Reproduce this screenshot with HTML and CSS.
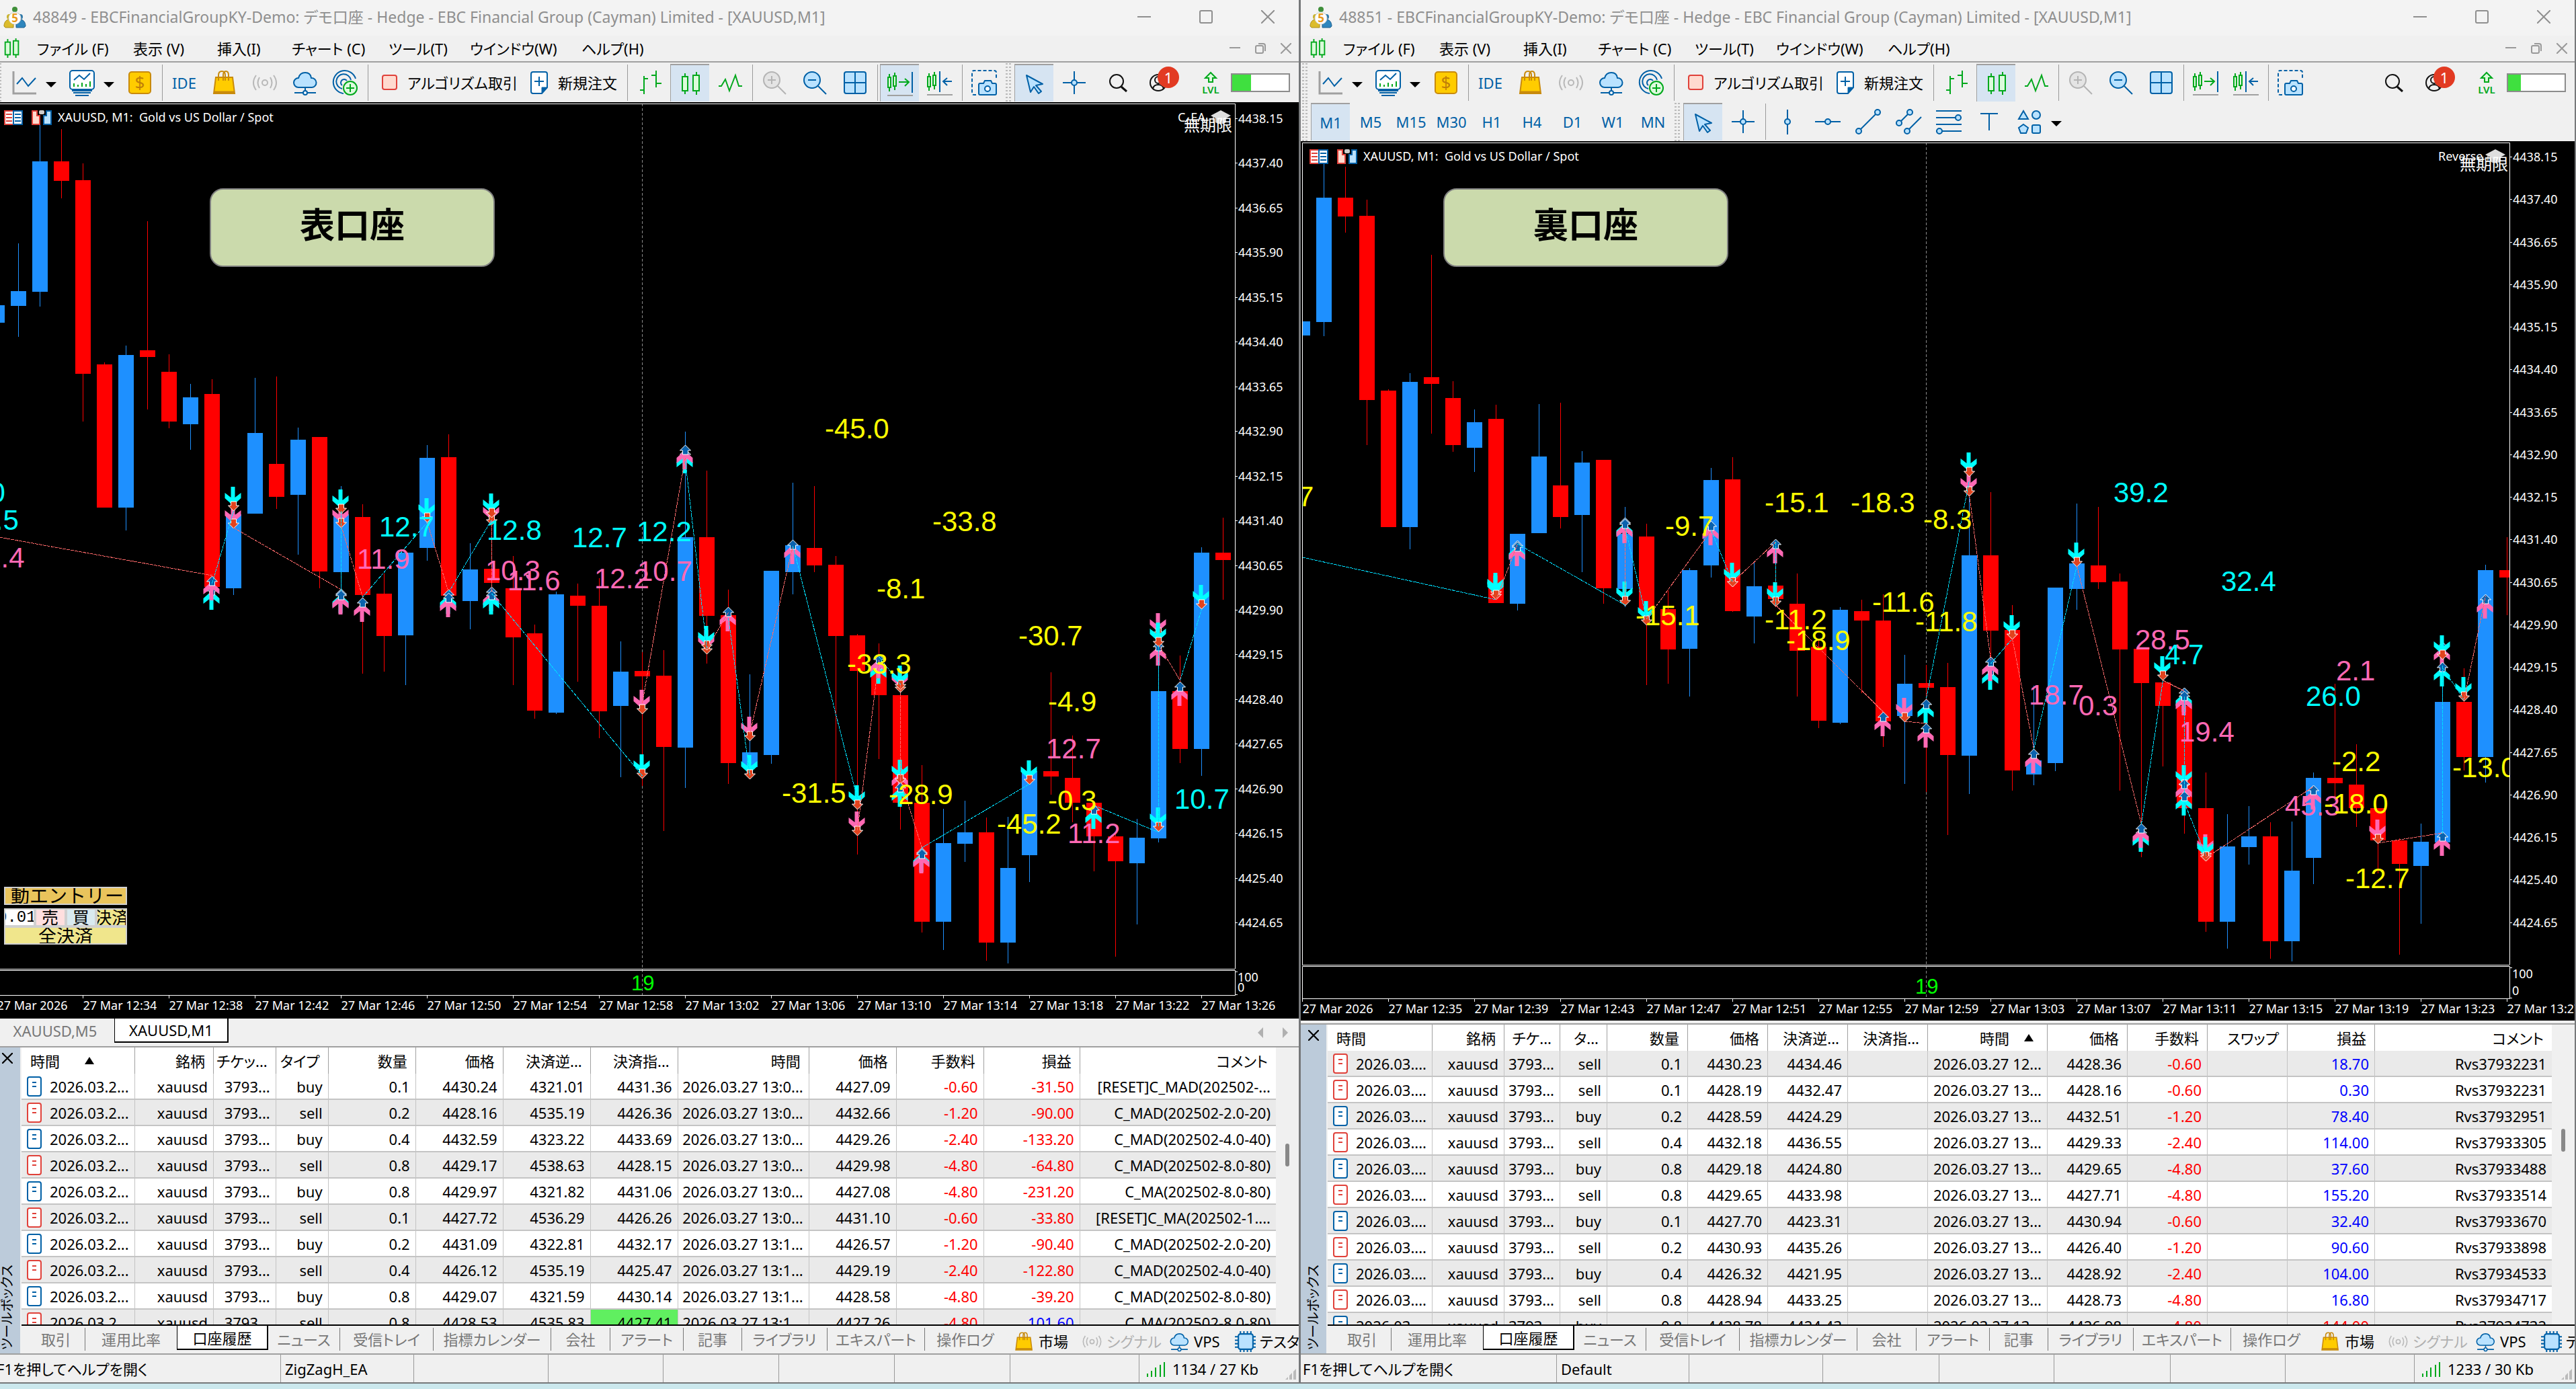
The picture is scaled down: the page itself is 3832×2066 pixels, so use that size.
FILE: index.html
```html
<!DOCTYPE html>
<html lang="ja">
<head>
<meta charset="utf-8">
<title>XAUUSD,M1</title>
<link rel="stylesheet" href="styles.css">
</head>
<body>
<svg class="sprite" aria-hidden="true">
  <symbol id="logo" viewBox="0 0 34 34"><circle cx="17" cy="6" r="4" fill="#3f8f3a"/><path d="M9 16C10 9 24 9 25 16L22 22H12z" fill="#55a047" stroke="#2f7a2e"/><circle cx="9" cy="17" r="4" fill="#c9b22a"/><path d="M1 31C1 21 10 18 15 24V33H3z" fill="#dcbc2c" stroke="#a98d16"/><circle cx="25" cy="17" r="4" fill="#2e78a8"/><path d="M33 31C33 21 24 18 19 24V33H31z" fill="#2f86bd" stroke="#1c5f8e"/><circle cx="17" cy="19" r="9" fill="#fff" stroke="#d8d8d8"/><text x="17" y="25" font-size="17" font-weight="700" text-anchor="middle" fill="#e89a1c">5</text></symbol>
  <symbol id="doc-candles" viewBox="0 0 26 32"><g fill="#d9fbd9" stroke="#00a81c" stroke-width="2"><path d="M6 1v30M19 0v31"/><rect x="2" y="6" width="8" height="20"/><rect x="15" y="4" width="8" height="22"/></g></symbol>
  <symbol id="line" viewBox="0 0 40 40"><path d="M4 3v33h34" fill="none" stroke="#a0a0a0" stroke-width="3"/><path d="M9 22l8-9 9 12 11-12" fill="none" stroke="#0060a6" stroke-width="2"/></symbol>
  <symbol id="tpl" viewBox="0 0 40 40"><path d="M5 32h30M7 35h26M10 39h20" stroke="#0060a6" stroke-width="2"/><rect x="2" y="2" width="36" height="28" rx="4" fill="#fff" stroke="#0060a6" stroke-width="2"/><path d="M8 16l8-7 7 6 9-9" fill="none" stroke="#0060a6" stroke-width="2"/><path d="M8 21v5M14 23v3M20 20v6M26 22v4M32 18v8" stroke="#00a81c" stroke-width="2"/></symbol>
  <symbol id="dollar" viewBox="0 0 40 40"><rect x="4" y="4" width="32" height="32" rx="4" fill="#ffcc00" stroke="#c88a0c" stroke-width="2"/><text x="20" y="29" font-size="26" text-anchor="middle" fill="#c07f08">$</text></symbol>
  <symbol id="bag" viewBox="0 0 40 40"><path d="M7 12h25l3 24H4z" fill="#ffcc00" stroke="#c88a0c" stroke-width="2"/><path d="M4 34h31" stroke="#c88a0c" stroke-width="3"/><path d="M11 17V9q0-6 5-6t5 6v8M18 17V9q0-6 4-6t4 6v8" fill="none" stroke="#c88a0c" stroke-width="2"/></symbol>
  <symbol id="signal" viewBox="0 0 40 40"><g fill="none" stroke="#b8b8b8" stroke-width="2"><circle cx="20" cy="20" r="4"/><path d="M12 12q-5 8 0 16M28 12q5 8 0 16M7 9q-8 11 0 22M33 9q8 11 0 22"/></g></symbol>
  <symbol id="cloud" viewBox="0 0 40 40"><path d="M10 27a7 7 0 0 1 0-14q2-8 10-8t9 8a7 7 0 0 1 1 14z" fill="#b9e2ff" stroke="#0060a6" stroke-width="2"/><path d="M20 27v6M4 35h32" stroke="#0060a6" stroke-width="2"/><circle cx="20" cy="35" r="3" fill="#fff" stroke="#0060a6" stroke-width="2"/></symbol>
  <symbol id="radar" viewBox="0 0 40 40"><g fill="none" stroke="#0060a6" stroke-width="2"><path d="M17 36A17 17 0 1 1 35 14M15 29a11 11 0 1 1 13-13M15 24a5 5 0 1 1 7-7"/></g><circle cx="27" cy="28" r="10" fill="#defade" stroke="#00a81c" stroke-width="2"/><path d="M27 22v12M21 28h12" stroke="#00a81c" stroke-width="2"/></symbol>
  <symbol id="stop" viewBox="0 0 24 24"><rect x="1" y="1" width="21" height="21" rx="3" fill="#ffdacf" stroke="#e0413a" stroke-width="2"/></symbol>
  <symbol id="order" viewBox="0 0 28 36"><path d="M5 2h18q3 0 3 3v20l-8 9H5q-3 0-3-3V5q0-3 3-3z" fill="#fff" stroke="#0060a6" stroke-width="2"/><path d="M18 34v-9h8z" fill="#0060a6" stroke="#0060a6"/><path d="M14 9v14M7 16h14" stroke="#0060a6" stroke-width="2"/></symbol>
  <symbol id="bars" viewBox="0 0 40 40"><path d="M12 10v27M6 31h6M12 14h6M30 2v25M23 9h7M30 21h8" fill="none" stroke="#00a81c" stroke-width="2"/></symbol>
  <symbol id="candles" viewBox="0 0 40 40"><g fill="#dcfbdc" stroke="#00a81c" stroke-width="2"><path d="M12 5v31M29 3v34"/><rect x="8" y="10" width="8" height="21"/><rect x="24" y="8" width="9" height="23"/></g></symbol>
  <symbol id="zig" viewBox="0 0 40 40"><path d="M3 25h4l6-10 6 17L28 9l5 16h5" fill="none" stroke="#00a81c" stroke-width="2"/></symbol>
  <symbol id="zin" viewBox="0 0 40 40"><g stroke="#b4b4b4" stroke-width="2"><circle cx="16" cy="16" r="12" fill="#e4e4e4"/><path d="M25 25l12 12M16 10v12M10 16h12"/></g></symbol>
  <symbol id="zout" viewBox="0 0 40 40"><g stroke="#0060a6" stroke-width="2"><circle cx="16" cy="16" r="12" fill="#b9e2ff"/><path d="M25 25l12 12M10 16h12"/></g></symbol>
  <symbol id="tiles" viewBox="0 0 40 40"><g stroke="#0060a6" stroke-width="2"><rect x="4" y="4" width="32" height="32" rx="3" fill="#b9e2ff"/><path d="M20 4v32M4 20h32"/></g></symbol>
  <symbol id="shift" viewBox="0 0 40 40"><g fill="#dcfbdc" stroke="#00a81c" stroke-width="2"><path d="M4 6v26M12 4v26"/><rect x="2" y="11" width="4" height="15"/><rect x="10" y="9" width="4" height="15"/><path d="M18 18h14M27 13l6 5-6 6" fill="none"/></g><path d="M38 3v31" stroke="#0060a6" stroke-width="2"/><path d="M1 38h38" stroke="#a0a0a0" stroke-width="2"/></symbol>
  <symbol id="scroll" viewBox="0 0 40 40"><g fill="#dcfbdc" stroke="#00a81c" stroke-width="2"><path d="M4 6v26M12 4v26"/><rect x="2" y="11" width="4" height="15"/><rect x="10" y="9" width="4" height="15"/></g><path d="M20 3v31M38 18H26M31 13l-6 5 6 6" fill="none" stroke="#0060a6" stroke-width="2"/><path d="M1 38h38" stroke="#a0a0a0" stroke-width="2"/></symbol>
  <symbol id="camera" viewBox="0 0 40 40"><path d="M8 38H5q-3 0-3-3V5q0-3 3-3h30q3 0 3 3v9" fill="none" stroke="#0060a6" stroke-width="2" stroke-dasharray="5 3"/><path d="M14 21h5l2-4h9l2 4h4q2 0 2 2v13q0 2-2 2H14q-2 0-2-2V23q0-2 2-2z" fill="#b9e2ff" stroke="#0060a6" stroke-width="2"/><circle cx="25" cy="29" r="4" fill="#fff" stroke="#0060a6" stroke-width="2"/></symbol>
  <symbol id="cursor" viewBox="0 0 40 40"><path d="M8 8l24 13-10 2 8 9-4 3-7-10-5 8z" fill="#b9e2ff" stroke="#0060a6" stroke-width="2" stroke-linejoin="round"/></symbol>
  <symbol id="cross" viewBox="0 0 40 40"><path d="M20 3v34M3 20h34" stroke="#0060a6" stroke-width="2"/><circle cx="20" cy="20" r="4" fill="#b9e2ff" stroke="#0060a6" stroke-width="2"/></symbol>
  <symbol id="search" viewBox="0 0 40 40"><circle cx="18" cy="18" r="10" fill="none" stroke="#111" stroke-width="2"/><path d="M25 26l8 7" stroke="#111" stroke-width="3"/></symbol>
  <symbol id="person" viewBox="0 0 40 40"><g fill="none" stroke="#111" stroke-width="2"><circle cx="20" cy="20" r="12"/><circle cx="20" cy="16" r="5"/><path d="M12 29q1-6 8-6t8 6"/></g></symbol>
  <symbol id="lvl" viewBox="0 0 40 40"><path d="M17 19v-6h-5l8-8 8 8h-5v6z" fill="#dcfbdc" stroke="#00a81c" stroke-width="2"/><text x="20" y="36" font-size="15" font-weight="600" text-anchor="middle" fill="#00a81c">LVL</text></symbol>
  <symbol id="vline" viewBox="0 0 40 40"><path d="M20 2v37" stroke="#0060a6" stroke-width="2"/><circle cx="20" cy="20" r="4" fill="#b9e2ff" stroke="#0060a6" stroke-width="2"/></symbol>
  <symbol id="hline" viewBox="0 0 40 40"><path d="M1 20h38" stroke="#0060a6" stroke-width="2"/><circle cx="20" cy="20" r="4" fill="#b9e2ff" stroke="#0060a6" stroke-width="2"/></symbol>
  <symbol id="trend" viewBox="0 0 40 40"><g fill="#b9e2ff" stroke="#0060a6" stroke-width="2"><path d="M6 34L34 6"/><circle cx="6" cy="34" r="4"/><circle cx="34" cy="6" r="4"/></g></symbol>
  <symbol id="channel" viewBox="0 0 40 40"><g fill="#b9e2ff" stroke="#0060a6" stroke-width="2"><path d="M6 22L22 6M18 34l21-21"/><circle cx="6" cy="22" r="4"/><circle cx="22" cy="6" r="4"/><circle cx="18" cy="34" r="4"/></g></symbol>
  <symbol id="fibo" viewBox="0 0 40 40"><g fill="#b9e2ff" stroke="#0060a6" stroke-width="2"><path d="M1 4h38M1 14h38M1 24h38M1 34h38"/><circle cx="34" cy="14" r="4"/><circle cx="6" cy="34" r="4"/></g></symbol>
  <symbol id="text" viewBox="0 0 40 40"><path d="M7 8h26M20 8v25" stroke="#0060a6" stroke-width="2"/></symbol>
  <symbol id="shapes" viewBox="0 0 40 40"><g fill="#b9e2ff" stroke="#0060a6" stroke-width="2"><path d="M11 4l7 12H4zM11 24l7 5-3 8H7l-3-8z"/><circle cx="30" cy="10" r="6"/><rect x="24" y="25" width="12" height="12" rx="2"/></g></symbol>
  <symbol id="panel" viewBox="0 0 30 22"><path d="M2 1h13v20H2z" fill="#fff" stroke="#e0413a" stroke-width="2"/><path d="M15 1h13v20H15z" fill="#fff" stroke="#0060a6" stroke-width="2"/><path d="M4 6h9M4 11h9M4 16h9" stroke="#e0413a" stroke-width="2"/><path d="M17 6h9M17 11h9M17 16h9" stroke="#0060a6" stroke-width="2"/></symbol>
  <symbol id="trade" viewBox="0 0 30 22"><path d="M1 1h7v7h4v13H1z" fill="#ffdacf" stroke="#e0413a" stroke-width="2"/><path d="M29 1h-7v7h-4v13h11z" fill="#b9e2ff" stroke="#0060a6" stroke-width="2"/><rect x="11" y="0" width="8" height="6" rx="2" fill="#ccc"/></symbol>
  <symbol id="hat" viewBox="0 0 30 22"><path d="M7 9v9q8 5 16 0V9z" fill="#c4c4c4"/><path d="M15 0l15 8-15 8L0 8z" fill="#dedede"/><path d="M4 10v9" stroke="#aaa" stroke-width="2"/></symbol>
  <symbol id="deal" viewBox="0 0 22 30"><rect x="1" y="1" width="20" height="28" rx="3" fill="#fff" stroke="currentColor" stroke-width="2"/><path d="M8 9h6M8 15h6" stroke="currentColor" stroke-width="2"/></symbol>
  <symbol id="chip" viewBox="0 0 30 30"><path d="M8 0v30M13 0v30M18 0v30M23 0v30M0 8h30M0 13h30M0 18h30M0 23h30" stroke="#0060a6" stroke-width="2"/><rect x="5" y="4" width="21" height="22" rx="3" fill="#b9e2ff" stroke="#0060a6" stroke-width="2"/></symbol>
  <symbol id="net" viewBox="0 0 28 22"><path d="M1 17v5M7 13v9M13 8v14M20 4v18M26 0v22" stroke="#00a81c" stroke-width="2"/></symbol>
</svg>

<main class="desktop">
  <section class="window" aria-label="48849">
    <header class="title-bar">
      <svg class="logo"><use href="#logo"/></svg>
      <h1>48849 - EBCFinancialGroupKY-Demo: デモ口座 - Hedge - EBC Financial Group (Cayman) Limited - [XAUUSD,M1]</h1>
      <div class="caption-buttons">
        <button aria-label="最小化"><svg viewBox="0 0 20 20"><path d="M0 10h20"/></svg></button>
        <button aria-label="最大化"><svg viewBox="0 0 20 20"><rect x="1" y="1" width="18" height="18" rx="2"/></svg></button>
        <button aria-label="閉じる"><svg viewBox="0 0 20 20"><path d="M0 0l20 20M20 0L0 20"/></svg></button>
      </div>
    </header>
    <nav class="menu-bar">
      <svg class="doc-icon"><use href="#doc-candles"/></svg>
      <button>ファイル (F)</button><button>表示 (V)</button><button>挿入(I)</button><button>チャート (C)</button><button>ツール(T)</button><button>ウインドウ(W)</button><button>ヘルプ(H)</button>
      <div class="mdi-buttons">
        <button aria-label="最小化"><svg viewBox="0 0 16 16"><path d="M0 7h16"/></svg></button>
        <button aria-label="元に戻す"><svg viewBox="0 0 16 16"><rect x="1" y="4" width="11" height="11" rx="2"/><path d="M5 1h7q3 0 3 3v8"/></svg></button>
        <button aria-label="閉じる"><svg viewBox="0 0 16 16"><path d="M0 0l16 16M16 0L0 16"/></svg></button>
      </div>
    </nav>
    <div class="toolbar">
      <span class="grip"></span>
      <button class="tool" aria-label="ライン"><svg><use href="#line"/></svg></button><button class="caret" aria-label="開く"></button>
      <button class="tool" aria-label="テンプレート"><svg><use href="#tpl"/></svg></button><button class="caret" aria-label="開く"></button>
      <button class="tool" aria-label="銘柄"><svg><use href="#dollar"/></svg></button><span class="sep"></span>
      <button class="tool word">IDE</button>
      <button class="tool" aria-label="市場"><svg><use href="#bag"/></svg></button>
      <button class="tool" aria-label="シグナル"><svg><use href="#signal"/></svg></button>
      <button class="tool" aria-label="VPS"><svg><use href="#cloud"/></svg></button>
      <button class="tool" aria-label="接続"><svg><use href="#radar"/></svg></button><span class="sep"></span>
      <button class="wide algo"><svg class="ic-stop"><use href="#stop"/></svg>アルゴリズム取引</button>
      <button class="wide order"><svg class="ic-order"><use href="#order"/></svg>新規注文</button><span class="sep"></span>
      <button class="tool" aria-label="バー"><svg><use href="#bars"/></svg></button>
      <button class="tool on" aria-label="ローソク足"><svg><use href="#candles"/></svg></button>
      <button class="tool" aria-label="折れ線"><svg><use href="#zig"/></svg></button><span class="sep"></span>
      <button class="tool" aria-label="拡大"><svg><use href="#zin"/></svg></button>
      <button class="tool" aria-label="縮小"><svg><use href="#zout"/></svg></button>
      <button class="tool" aria-label="整列"><svg><use href="#tiles"/></svg></button><span class="sep"></span>
      <button class="tool on" aria-label="自動スクロール"><svg><use href="#shift"/></svg></button>
      <button class="tool" aria-label="チャートシフト"><svg><use href="#scroll"/></svg></button><span class="sep"></span>
      <button class="tool" aria-label="撮影"><svg><use href="#camera"/></svg></button>
      <span class="grip"></span>
      <button class="tool on" aria-label="カーソル"><svg><use href="#cursor"/></svg></button>
      <button class="tool" aria-label="十字"><svg><use href="#cross"/></svg></button>
      <div class="account">
        <button class="tool" aria-label="検索"><svg><use href="#search"/></svg></button>
        <button class="tool" aria-label="アカウント"><svg><use href="#person"/></svg><span class="badge">1</span></button>
        <svg class="lvl"><use href="#lvl"/></svg>
        <div class="level"><i style="width:33%"></i></div>
      </div>
    </div>
    <div class="chart">
      <svg class="plot" id="front"></svg>
      <div class="tag tag-front">表口座</div>
      <div class="trade-panel">
        <button class="entry">動エントリー</button>
        <div class="lot"><input aria-label="ロット" value="0.01"><button class="sell">売</button><button class="buy">買</button><button class="close">決済</button></div>
        <button class="close-all">全決済</button>
      </div>
    </div>
    <div class="chart-tabs"><button>XAUUSD,M5</button><button class="active">XAUUSD,M1</button><span class="arrows"><i class="prev"></i><i class="next"></i></span></div>
    <section class="toolbox toolbox-front">
      <aside class="strip"><button aria-label="閉じる"><svg viewBox="0 0 14 14"><path d="M0 0l14 14M14 0L0 14"/></svg></button><span>ツールボックス</span></aside>
      <div class="history">
        <div class="grid-wrap">
          <table class="even" id="history-front">
            <colgroup><col style="width:169px"><col style="width:117px"><col style="width:91px"><col style="width:78px"><col style="width:130px"><col style="width:130px"><col style="width:130px"><col style="width:130px"><col style="width:195px"><col style="width:130px"><col style="width:130px"><col style="width:143px"><col></colgroup>
            <thead><tr><th class="first">時間<i class="sort"></i></th><th>銘柄</th><th>チケッ...</th><th>タイプ</th><th>数量</th><th>価格</th><th>決済逆...</th><th>決済指...</th><th>時間</th><th>価格</th><th>手数料</th><th>損益</th><th>コメント</th></tr></thead>
            <tbody></tbody>
          </table>
          <div class="scroll"><i class="thumb-front"></i></div>
        </div>
        <nav class="box-tabs">
          <button>取引</button><button>運用比率</button><button class="active">口座履歴</button><button>ニュース</button><button>受信トレイ</button><button>指標カレンダー</button><button>会社</button><button>アラート</button><button>記事</button><button>ライブラリ</button><button>エキスパート</button><button>操作ログ</button>
          <a href="#market"><svg><use href="#bag"/></svg>市場</a><a href="#signals" class="off"><svg><use href="#signal"/></svg>シグナル</a><a href="#vps"><svg><use href="#cloud"/></svg>VPS</a><a href="#tester"><svg><use href="#chip"/></svg>テスター</a>
        </nav>
      </div>
    </section>
    <footer class="status status-front"><span>F1を押してヘルプを開く</span><span>ZigZagH_EA</span><span></span><span></span><span></span><span></span><span></span><span></span><span class="net"><svg><use href="#net"/></svg>1134 / 27 Kb<i class="resize"></i></span></footer>
  </section>

  <section class="window" aria-label="48851">
    <header class="title-bar">
      <svg class="logo"><use href="#logo"/></svg>
      <h1>48851 - EBCFinancialGroupKY-Demo: デモ口座 - Hedge - EBC Financial Group (Cayman) Limited - [XAUUSD,M1]</h1>
      <div class="caption-buttons">
        <button aria-label="最小化"><svg viewBox="0 0 20 20"><path d="M0 10h20"/></svg></button>
        <button aria-label="最大化"><svg viewBox="0 0 20 20"><rect x="1" y="1" width="18" height="18" rx="2"/></svg></button>
        <button aria-label="閉じる"><svg viewBox="0 0 20 20"><path d="M0 0l20 20M20 0L0 20"/></svg></button>
      </div>
    </header>
    <nav class="menu-bar">
      <svg class="doc-icon"><use href="#doc-candles"/></svg>
      <button>ファイル (F)</button><button>表示 (V)</button><button>挿入(I)</button><button>チャート (C)</button><button>ツール(T)</button><button>ウインドウ(W)</button><button>ヘルプ(H)</button>
      <div class="mdi-buttons">
        <button aria-label="最小化"><svg viewBox="0 0 16 16"><path d="M0 7h16"/></svg></button>
        <button aria-label="元に戻す"><svg viewBox="0 0 16 16"><rect x="1" y="4" width="11" height="11" rx="2"/><path d="M5 1h7q3 0 3 3v8"/></svg></button>
        <button aria-label="閉じる"><svg viewBox="0 0 16 16"><path d="M0 0l16 16M16 0L0 16"/></svg></button>
      </div>
    </nav>
    <div class="toolbar">
      <span class="grip"></span>
      <button class="tool" aria-label="ライン"><svg><use href="#line"/></svg></button><button class="caret" aria-label="開く"></button>
      <button class="tool" aria-label="テンプレート"><svg><use href="#tpl"/></svg></button><button class="caret" aria-label="開く"></button>
      <button class="tool" aria-label="銘柄"><svg><use href="#dollar"/></svg></button><span class="sep"></span>
      <button class="tool word">IDE</button>
      <button class="tool" aria-label="市場"><svg><use href="#bag"/></svg></button>
      <button class="tool" aria-label="シグナル"><svg><use href="#signal"/></svg></button>
      <button class="tool" aria-label="VPS"><svg><use href="#cloud"/></svg></button>
      <button class="tool" aria-label="接続"><svg><use href="#radar"/></svg></button><span class="sep"></span>
      <button class="wide algo"><svg class="ic-stop"><use href="#stop"/></svg>アルゴリズム取引</button>
      <button class="wide order"><svg class="ic-order"><use href="#order"/></svg>新規注文</button><span class="sep"></span>
      <button class="tool" aria-label="バー"><svg><use href="#bars"/></svg></button>
      <button class="tool on" aria-label="ローソク足"><svg><use href="#candles"/></svg></button>
      <button class="tool" aria-label="折れ線"><svg><use href="#zig"/></svg></button><span class="sep"></span>
      <button class="tool" aria-label="拡大"><svg><use href="#zin"/></svg></button>
      <button class="tool" aria-label="縮小"><svg><use href="#zout"/></svg></button>
      <button class="tool" aria-label="整列"><svg><use href="#tiles"/></svg></button><span class="sep"></span>
      <button class="tool" aria-label="自動スクロール"><svg><use href="#shift"/></svg></button>
      <button class="tool" aria-label="チャートシフト"><svg><use href="#scroll"/></svg></button><span class="sep"></span>
      <button class="tool" aria-label="撮影"><svg><use href="#camera"/></svg></button>
      <div class="account">
        <button class="tool" aria-label="検索"><svg><use href="#search"/></svg></button>
        <button class="tool" aria-label="アカウント"><svg><use href="#person"/></svg><span class="badge">1</span></button>
        <svg class="lvl"><use href="#lvl"/></svg>
        <div class="level"><i style="width:23%"></i></div>
      </div>
    </div>
    <div class="toolbar">
      <span class="grip"></span>
      <button class="tool word on">M1</button><button class="tool word">M5</button><button class="tool word">M15</button><button class="tool word">M30</button><button class="tool word">H1</button><button class="tool word">H4</button><button class="tool word">D1</button><button class="tool word">W1</button><button class="tool word">MN</button>
      <span class="grip"></span>
      <button class="tool on" aria-label="カーソル"><svg><use href="#cursor"/></svg></button>
      <button class="tool" aria-label="十字"><svg><use href="#cross"/></svg></button><span class="sep"></span>
      <button class="tool" aria-label="垂直線"><svg><use href="#vline"/></svg></button>
      <button class="tool" aria-label="水平線"><svg><use href="#hline"/></svg></button>
      <button class="tool" aria-label="トレンドライン"><svg><use href="#trend"/></svg></button>
      <button class="tool" aria-label="チャネル"><svg><use href="#channel"/></svg></button>
      <button class="tool" aria-label="フィボナッチ"><svg><use href="#fibo"/></svg></button>
      <button class="tool" aria-label="テキスト"><svg><use href="#text"/></svg></button>
      <button class="tool" aria-label="図形"><svg><use href="#shapes"/></svg></button><button class="caret" aria-label="開く"></button>
    </div>
    <div class="chart">
      <svg class="plot" id="back"></svg>
      <div class="tag tag-back">裏口座</div>
    </div>
    <section class="toolbox toolbox-back">
      <aside class="strip"><button aria-label="閉じる"><svg viewBox="0 0 14 14"><path d="M0 0l14 14M14 0L0 14"/></svg></button><span>ツールボックス</span></aside>
      <div class="history">
        <div class="grid-wrap">
          <table class="odd" id="history-back">
            <colgroup><col style="width:154px"><col style="width:107px"><col style="width:83px"><col style="width:70px"><col style="width:120px"><col style="width:119px"><col style="width:119px"><col style="width:119px"><col style="width:178px"><col style="width:119px"><col style="width:119px"><col style="width:119px"><col style="width:130px"><col></colgroup>
            <thead><tr><th class="first">時間</th><th>銘柄</th><th>チケ...</th><th>タ...</th><th>数量</th><th>価格</th><th>決済逆...</th><th>決済指...</th><th class="sorted">時間<i class="sort"></i></th><th>価格</th><th>手数料</th><th>スワップ</th><th>損益</th><th>コメント</th></tr></thead>
            <tbody></tbody>
          </table>
          <div class="scroll"><i class="thumb-back"></i></div>
        </div>
        <nav class="box-tabs">
          <button>取引</button><button>運用比率</button><button class="active">口座履歴</button><button>ニュース</button><button>受信トレイ</button><button>指標カレンダー</button><button>会社</button><button>アラート</button><button>記事</button><button>ライブラリ</button><button>エキスパート</button><button>操作ログ</button>
          <a href="#market"><svg><use href="#bag"/></svg>市場</a><a href="#signals" class="off"><svg><use href="#signal"/></svg>シグナル</a><a href="#vps"><svg><use href="#cloud"/></svg>VPS</a><a href="#tester"><svg><use href="#chip"/></svg>テスター</a>
        </nav>
      </div>
    </section>
    <footer class="status status-back"><span>F1を押してヘルプを開く</span><span>Default</span><span></span><span></span><span></span><span></span><span></span><span></span><span class="net"><svg><use href="#net"/></svg>1233 / 30 Kb<i class="resize"></i></span></footer>
  </section>
</main>
<script src="app.js"></script>
</body>
</html>
```
FILE: styles.css
```css
* { box-sizing: border-box; }
body {
  margin: 0;
  background: #cbe8ed;
  font-family: "Noto Sans", "Noto Sans CJK JP", sans-serif;
  font-size: 22px;
  line-height: 30px;
  font-feature-settings: "palt";
  color: #000;
  overflow: hidden;
}
button, input { font: inherit; font-feature-settings: inherit; color: inherit; border: 0; background: none; padding: 0; margin: 0; border-radius: 0; }
.sprite { position: absolute; width: 0; height: 0; }

.desktop {
  display: grid;
  grid-template-columns: 1944fr 1898fr;
  height: 100vh;
  margin-left: -10px;
  padding-bottom: 8px;
}
.window {
  display: flex;
  flex-direction: column;
  min-width: 0;
  min-height: 0;
  background: #f0f0f0;
  border: solid #76787a;
  border-width: 0 2px 2px;
  overflow: hidden;
}
.window + .window { border-left-width: 1px; }

.title-bar { display: flex; flex: none; align-items: center; height: 53px; padding: 0 0 4px 13px; background: #f3f3f3; color: #8f8f8f; }
.logo { width: 34px; height: 34px; margin-right: 10px; }
.title-bar h1 { margin: 0; flex: 1; font-size: 23px; font-weight: 400; white-space: nowrap; }
.caption-buttons, .mdi-buttons { display: flex; }
.caption-buttons button { width: 92px; height: 48px; display: grid; place-items: center; }
.caption-buttons svg { width: 20px; height: 20px; fill: none; stroke: #8f8f8f; stroke-width: 2; }

.menu-bar { display: grid; grid-template-columns: 50px 143px 125px 111px 144px 121px 166px 1fr auto; flex: none; align-items: center; height: 40px; padding-left: 13px; border-bottom: 2px solid #a0a0a0; white-space: nowrap; }
.menu-bar button { text-align: left; }
.doc-icon { width: 26px; height: 30px; }
.mdi-buttons button { width: 38px; height: 30px; display: grid; place-items: center; }
.mdi-buttons svg { width: 16px; height: 16px; fill: none; stroke: #999; stroke-width: 2; }

.toolbar { display: flex; flex: none; align-items: center; height: 59px; }
.toolbar + .toolbar { height: 58px; }
.grip { width: 14px; height: 57px; background: repeating-linear-gradient(#bbb 0 2px, transparent 2px 5px) 2px 0 / 3px 100% no-repeat, repeating-linear-gradient(#bbb 0 2px, transparent 2px 5px) 7px 0 / 3px 100% no-repeat; }
.tool { position: relative; flex: none; width: 60px; height: 56px; display: grid; place-items: center; }
.tool svg { width: 40px; height: 40px; }
.tool.on { width: 58px; margin: 0 1px; background: #d6e4f2; border-top: 2px solid #a0a0a0; border-left: 1px solid #a0a0a0; }
.word { color: #0060a6; }
.caret { width: 26px; height: 56px; }
.caret::before { content: ""; display: block; width: 0; margin: 6px 0 0 2px; border: solid transparent; border-width: 8px 8px 0; border-top-color: #000; }
.sep { flex: none; width: 6px; height: 54px; background: linear-gradient(#999, #999) 50% 0 / 1px 100% no-repeat; }
.wide { display: flex; align-items: center; height: 56px; padding-left: 18px; white-space: nowrap; }
.algo { width: 220px; gap: 14px; }
.order { width: 160px; gap: 14px; }
.ic-stop { width: 24px; height: 24px; flex: none; }
.ic-order { width: 28px; height: 36px; flex: none; }
.account { display: flex; align-items: center; margin-left: auto; padding-right: 13px; }
.badge { position: absolute; top: 4px; left: 29px; width: 32px; height: 32px; border-radius: 50%; background: #e23a22; color: #fff; line-height: 32px; text-align: center; }
.lvl { width: 40px; height: 40px; margin: 0 10px 0 28px; }
.level { width: 88px; height: 28px; border: 2px solid #8c8c8c; background: #fff; }
.level i { display: block; height: 100%; background: #3fe03f; }

.chart { position: relative; flex: 1; min-height: 0; background: #000; overflow: hidden; }
.plot { display: block; width: 100%; height: 100%; font-size: 18px; fill: #fff; }
.plot text { white-space: pre; }
.plot .link { shape-rendering: crispEdges; }
.plot .profit { font-family: "Liberation Sans", Arial, sans-serif; font-size: 42px; }
.plot .count { font-family: "Liberation Sans", Arial, sans-serif; font-size: 31px; fill: #0f0; }
.plot .expiry { font-size: 24px; }
.tag { position: absolute; width: 424px; height: 117px; border: 2px solid #808080; border-radius: 20px; background: #cbdaac; color: #000; font-size: 52px; font-weight: 700; line-height: 104px; text-align: center; font-feature-settings: normal; }
.tag-front { top: 128px; left: 320px; }
.tag-back { top: 70px; left: 212px; }
.trade-panel { position: absolute; left: 14px; bottom: 110px; width: 183px; display: grid; font-size: 25px; font-feature-settings: normal; }
.trade-panel button, .trade-panel input { display: flex; align-items: center; justify-content: center; height: 27px; min-width: 0; border: 2px solid #d0d0d0; line-height: 23px; overflow: hidden; white-space: nowrap; }
.trade-panel .entry { justify-content: flex-start; padding-left: 8px; background: #e9c45c; margin-bottom: 5px; font-size: 28px; }
.lot { display: grid; grid-template-columns: repeat(4, 1fr); }
.lot input { width: 100%; background: #fff; font-family: "Liberation Mono", monospace; font-size: 24px; text-indent: -12px; }
.trade-panel .sell { background: #ffdfdf; }
.trade-panel .buy { background: #d9eaf0; }
.trade-panel .close { background: #f0e68c; }
.trade-panel .close-all { background: #f0e68c; font-size: 27px; }

.chart-tabs { display: flex; flex: none; align-items: flex-start; height: 41px; padding-left: 8px; color: #777; }
.chart-tabs button { width: 170px; height: 36px; padding-right: 6px; }
.chart-tabs .active { padding: 0; background: #fff; color: #000; border: solid #000; border-width: 0 2px 2px 1px; }
.arrows { display: flex; gap: 29px; margin: 13px 16px 0 auto; }
.arrows i { border: solid transparent; border-width: 8px 0; }
.arrows .prev { border-right: 8px solid #b0b0b0; }
.arrows .next { border-left: 8px solid #b0b0b0; }

.toolbox { display: flex; flex: none; border-top: 2px solid #a0a0a0; }
.toolbox-front { height: 457px; }
.toolbox-back { height: 491px; margin-top: 4px; }
.strip { display: flex; flex-direction: column; justify-content: space-between; align-items: center; flex: none; width: 38px; padding: 7px 0 5px; margin-right: 2px; background: #bccbda; }
.strip button { height: 18px; }
.strip svg { display: block; width: 16px; height: 16px; stroke: #000; stroke-width: 2; }
.strip span { writing-mode: vertical-rl; text-orientation: sideways; transform: rotate(180deg); font-size: 20px; }
.history { display: flex; flex-direction: column; flex: 1; min-width: 0; }
.grid-wrap { display: flex; flex: 1; min-height: 0; overflow: hidden; border-bottom: 2px solid #000; }
.scroll { flex: none; width: 34px; }
.scroll i { display: block; width: 6px; height: 34px; margin-left: 14px; border-radius: 3px; background: #888; }
.scroll .thumb-front { margin-top: 143px; }
.scroll .thumb-back { margin-top: 155px; }
table { flex: 1; align-self: flex-start; min-width: 0; table-layout: fixed; border-collapse: separate; border-spacing: 0; background: #fff; }
th, td { padding: 0 8px 0 4px; overflow: hidden; white-space: nowrap; text-align: right; border-right: 1px solid #c4c4c4; }
th:last-child, td:last-child { border-right: 0; }
th { height: 39px; padding-right: 12px; font-weight: 400; border-color: #a0a0a0; }
td { height: 39px; border-bottom: 2px solid #c4c4c4; }
th.first { text-align: left; padding-left: 13px; }
.sort { display: inline-block; margin-left: 37px; border: solid transparent; border-width: 0 7px 11px; border-bottom-color: #000; vertical-align: 4px; }
th.sorted { padding-right: 20px; }
.sorted .sort { margin-left: 22px; }
td.first { display: flex; align-items: center; gap: 12px; padding-left: 8px; }
td.first svg { width: 22px; height: 30px; flex: none; }
.i-buy { color: #0060a6; }
.i-sell { color: #e0413a; }
.even tbody tr:nth-child(even), .odd tbody tr:nth-child(odd) { background: #eaeaea; }
.neg { color: #f00; }
.pos { color: #00f; }
.hit { background: #60ef60; }

.box-tabs { display: grid; grid-template-columns: 95px 136px 136px 107px 139px 175px 88px 109px 87px 127px 145px 132px 101px 130px 98px auto; flex: none; height: 41px; color: #777; white-space: nowrap; overflow: hidden; }
.box-tabs button { height: 34px; margin-top: 3px; border-right: 1px solid #777; }
.box-tabs button:nth-child(2), .box-tabs button:nth-child(12) { border: 0; }
.box-tabs button:first-child { padding-left: 8px; }
.box-tabs button:nth-child(12) { padding-right: 12px; }
.box-tabs .active { height: 38px; margin-top: -2px; padding-top: 4px; background: #fff; color: #000; border: solid #000; border-width: 0 2px 2px 1px; }
.box-tabs a { display: flex; align-items: center; gap: 6px; height: 36px; margin-top: 5px; color: #000; text-decoration: none; }
.box-tabs a.off { color: #b0b0b0; }
.box-tabs svg { width: 31px; height: 31px; flex: none; }

.status { display: grid; flex: none; height: 43px; border-top: 2px solid #a0a0a0; align-items: stretch; white-space: nowrap; }
.status-front { grid-template-columns: 426px 198px 200px 171px 172px 172px 172px 192px 1fr; }
.status-back { grid-template-columns: 381px 197px 199px 173px 171px 173px 171px 192px 1fr; }
.status span { padding: 6px 0 0 6px; border-right: 1px solid #999; }
.status span:first-child { padding-left: 3px; }
.status .net { position: relative; display: flex; gap: 10px; border: 0; padding-left: 11px; }
.net svg { width: 28px; height: 22px; margin-top: 5px; }
.resize { position: absolute; right: 4px; bottom: 4px; width: 16px; height: 16px; background: repeating-linear-gradient(90deg, #bbb 0 4px, transparent 4px 6px); clip-path: polygon(100% 0, 100% 100%, 0 100%); }
```
FILE: app.js
```js
// Candles: [bull, high, body top, body bottom, low] on the vertical scale of the front chart.
const candles = [
  [1,454,454,480,480],[1,362,433,455,501],[1,185,240,434,456],[0,192,240,269,295],[0,243,268,556,627],
  [0,539,542,755,755],[1,514,528,755,789],[0,329,521,531,609],[0,527,553,627,637],[1,571,591,631,669],
  [0,564,586,873,873],[1,765,765,875,885],[1,562,644,764,764],[0,560,690,739,757],[1,636,654,736,825],
  [0,650,650,850,875],[1,723,765,851,880],[0,750,769,885,1002],[0,853,883,946,999],[1,819,822,945,1019],
  [1,662,681,815,834],[0,646,680,886,887],[1,808,847,894,936],[0,775,846,867,880],[0,827,875,948,1019],
  [0,929,942,1057,1069],[1,880,884,1060,1062],[0,868,886,901,1014],[0,860,901,1058,1098],[1,954,999,1050,1156],
  [0,970,998,1006,1169],[0,967,1005,1111,1236],[1,642,799,1112,1172],[0,700,799,916,987],[0,877,915,1135,1166],
  [1,1003,1119,1141,1158],[1,849,849,1123,1136],[1,718,811,851,884],[0,723,815,841,851],[0,827,840,946,1167],
  [0,943,945,998,1271],[0,957,997,1034,1129],[0,1012,1034,1194,1234],[0,1138,1194,1371,1387],[1,1203,1254,1371,1413],
  [1,1191,1238,1255,1282],[0,1216,1238,1402,1429],[1,1215,1291,1402,1433],[1,1138,1147,1272,1312],[0,1000,1147,1155,1182],
  [0,1094,1157,1194,1223],[0,1194,1194,1244,1296],[0,1241,1244,1281,1423],[1,1218,1246,1284,1375],[1,971,1028,1247,1253],
  [0,975,1028,1114,1135],[1,814,822,1114,1154],[0,770,822,833,892]
];
const P = '#ff69b4', C = '#00ffff', Y = '#ffff00';

const charts = [
  {
    id: 'front', ox: 8, oy: -152, x0: 27.5, left: -20, right: 1837, top: 154, split: 1441, bottom: 1480, end: 1934,
    tick: 177, step: 66.45, timeFrom: -1, timeStart: 34, sub: [1460, 1475], count: [939, 1473], head: [5, 164], expert: ['C_EA', 1752, 1761],
    labels: [
      ['12.7',562,799,C],['12.8',722,804,C],['12.7',849,815,C],['12.2',945,806,C],['11.9',529,847,P],['10.3',720,864,P],['11.6',753,879,P],
      ['12.2',882,876,P],['10.7',946,865,P],['12.5',-56,789,C],['12.0',-76,748,C],['11.4',-44,845,P],
      ['-45.0',1225,653,Y],['-33.8',1385,791,Y],['-8.1',1302,891,Y],['-30.7',1513,961,Y],['-33.3',1258,1003,Y],['-4.9',1557,1059,Y],
      ['12.7',1554,1129,P],['-31.5',1161,1195,Y],['-28.9',1320,1197,Y],['-0.3',1557,1206,Y],['-45.2',1481,1241,Y],['11.2',1586,1255,P],['10.7',1745,1204,C]
    ],
    marks: [
      [9,879,1,C],[9,865,1,P],[10,778,0,P],[10,752,0,C],[15,777,0,P],[15,756,0,C],[15,884,1,C],[15,886,1,P],[16,897,1,P],[19,769,0,C],
      [20,885,1,C],[20,890,1,P],[22,773,0,P],[22,762,0,C],[22,881,1,P],[22,886,1,C],[29,1054,0,P],[29,1150,0,C],[31,676,1,C],[31,670,1,P],
      [32,965,0,P],[32,959,0,C],[33,911,1,P],[34,1094,0,P],[34,1151,0,C],[36,811,1,P],[39,1196,0,C],[39,1235,0,P],[40,989,1,C],[40,981,1,P],
      [41,1022,0,P],[41,1018,0,C],[41,1150,1,P],[41,1158,0,C],[41,1172,1,C],[42,1269,1,C],[42,1271,1,P],[47,1159,0,C],[50,1205,1,C],
      [53,940,0,P],[53,962,1,P],[53,954,0,C],[53,1229,0,C],[54,1022,1,P],[55,898,0,C]
    ],
    links: [
      [-.9,799,9,856,P],[9,868,10,760,C],[10,785,15,877,P],[15,760,15,880,C],[15,782,16,888,P],[16,888,19,777,C],[19,777,20,881,P],[20,881,22,773,C],
      [22,773,22,880,P],[22,883,29,1154,C],[29,1046,31,680,P],[31,686,32,965,C],[32,965,33,911,P],[33,919,34,1153,C],[34,1091,36,812,P],[36,812,39,1188,C],
      [39,1235,40,982,P],[40,977,41,1018,C],[41,1018,41,1160,P],[41,1160,42,1261,P],[42,1261,47,1166,C],[50,1198,53,1238,C],[53,960,53,1230,C],[53,959,54,1012,P],[54,1012,55,906,C]
    ]
  },
  {
    id: 'back', ox: -1935, oy: -210, x0: 1937.5, left: 1937, right: 3733, top: 212, split: 1435, bottom: 1485, end: 3830,
    tick: 234, step: 63.26, timeFrom: 0, timeStart: 35, sub: [1455, 1480], count: [2849, 1478], head: [1947, 222], expert: ['Reverse', 3627, 3659],
    labels: [
      ['-9.7',1880,754,Y],['-9.7',2475,798,Y],['-15.1',2623,763,Y],['-18.3',2751,763,Y],['-8.3',2859,788,Y],['-15.1',2431,931,Y],['-11.2',2623,937,Y],
      ['-18.9',2655,968,Y],['-11.6',2783,911,Y],['-11.8',2847,940,Y],['39.2',3142,748,C],['32.4',3302,880,C],['28.5',3174,967,P],['4.7',3218,989,C],
      ['18.7',3016,1049,P],['0.3',3090,1065,P],['19.4',3240,1104,P],['2.1',3473,1013,P],['26.0',3428,1051,C],['-2.2',3467,1148,Y],['45.3',3397,1214,P],
      ['-18.0',3455,1211,Y],['-13.0',3646,1157,Y],['-12.7',3487,1322,Y]
    ],
    marks: [
      [9,880,0,C],[9,884,0,C],[10,812,1,C],[10,814,1,P],[15,778,1,C],[15,780,1,P],[15,893,0,C],[16,922,0,C],[19,783,1,P],[20,865,0,C],[22,810,1,P],[22,894,0,C],
      [27,1067,1,P],[28,1066,0,P],[29,1048,1,C],[29,1084,1,P],[31,730,0,P],[31,701,0,C],[32,998,1,C],[32,985,1,P],[33,943,0,C],[34,1122,1,P],
      [36,835,0,C],[39,1239,1,C],[39,1233,1,P],[40,1004,0,C],[41,1031,1,C],[41,1036,1,P],[41,1166,0,C],[41,1167,1,P],[41,1185,1,C],[42,1269,0,P],[42,1273,0,C],
      [47,1176,1,P],[50,1247,0,P],[53,963,1,P],[53,973,0,C],[53,993,1,C],[53,1245,1,P],[54,1035,0,C],[55,892,1,P]
    ],
    links: [
      [0,829,9,892,C],[9,892,10,809,P],[10,809,15,900,C],[15,785,15,893,P],[15,785,16,921,C],[16,921,19,789,P],[19,789,20,866,C],[20,866,22,806,P],[22,806,22,900,C],
      [22,900,27,1059,P],[28,1073,29,1076,P],[29,1039,31,715,C],[31,736,32,982,P],[32,987,33,950,C],[33,950,34,1114,P],[34,1114,36,842,C],[36,842,39,1226,P],
      [39,1226,40,1012,C],[40,1012,41,1028,P],[41,1036,41,1180,C],[41,1194,42,1273,C],[42,1276,47,1170,P],[50,1254,53,1239,P],[53,990,53,1240,C],[53,993,54,1041,C],[54,1041,55,886,P]
    ]
  }
];

// A broad profit arrow with a small outlined deal marker over its tip.
function arrow(x, y, up, color) {
  const s = up ? 1 : -1;
  const big = `M${x - 4} ${y + s * 28}h6v${-s * 16}l9 ${s * 7}v${-s * 8}l-10 ${-s * 9}h-4l-10 ${s * 9}v${s * 8}l9 ${-s * 7}z`;
  const small = `M${x} ${y - s * 8}l8 ${s * 8}h-4v${s * 6}h-8v${-s * 6}h-4z`;
  return `<path d="${big}" fill="${color}"/><path d="${small}" fill="${up ? '#0a62ad' : '#e2431e'}" stroke="#fff"/>`;
}

function drawChart(c) {
  const x = i => c.x0 + 32 * i;
  const y = v => Math.round(c.tick + (v - 177) * c.step / 66.45);
  const out = [];
  const w = c.right - c.left;
  out.push(`<clipPath id="clip-${c.id}"><rect x="${c.left}" y="${c.top}" width="${w}" height="${c.bottom - c.top}"/></clipPath>`);
  out.push(`<g clip-path="url(#clip-${c.id})">`);
  out.push(`<path d="M${x(29)} ${c.top}V${c.bottom}" stroke="#8a8a8a" stroke-dasharray="4 3"/>`);
  candles.forEach(([bull, high, top, bottom, low], n) => {
    const cx = x(n - 1), fill = bull ? '#1e90ff' : '#ff0000';
    out.push(`<rect x="${cx - .5}" y="${y(high)}" width="1" height="${y(low) - y(high)}" fill="${fill}"/>`);
    out.push(`<rect x="${cx - 11.5}" y="${y(top)}" width="23" height="${y(bottom) - y(top)}" fill="${fill}"/>`);
  });
  c.marks.forEach(([i, v, up, color]) => out.push(arrow(x(i), v, up, color)));
  c.links.forEach(([i, a, j, b, color]) => out.push(`<path class="link" d="M${x(i)} ${a}L${x(j)} ${b}" stroke="${color === P ? '#ff6a6a' : '#00dfff'}" stroke-dasharray="5 1"/>`));
  c.labels.forEach(([t, lx, ly, color]) => out.push(`<text class="profit" x="${lx + 2}" y="${ly - 1}" fill="${color}">${t}</text>`));
  out.push('</g>');
  out.push(`<path d="M${c.left + .5} ${c.split}V${c.top + .5}H${c.right + .5}V${c.split}M${c.left} ${c.split + .5}H${c.right}M${c.left + .5} ${c.bottom}V${c.split + 2.5}H${c.right + .5}V${c.bottom + .5}H${c.left}" fill="none" stroke="#fff"/>`);
  for (let n = 0; n < 19; n++) {
    const ty = Math.round(c.tick + n * c.step);
    out.push(`<path d="M${c.right} ${ty - .5}h4" stroke="#fff"/><text x="${c.right + 5}" y="${ty + 6}">${(4438.15 - n * .75).toFixed(2)}</text>`);
  }
  out.push(`<path d="M${c.right} ${c.split + 4.5}h4M${c.right} ${c.bottom - .5}h4" stroke="#fff"/>`);
  out.push(`<text x="${c.right + 4}" y="${c.sub[0]}">100</text><text x="${c.right + 4}" y="${c.sub[1]}">0</text>`);
  out.push(`<text class="count" x="${c.count[0]}" y="${c.count[1]}">19</text>`);
  for (let n = 0; n < 15; n++) {
    const tx = x(c.timeFrom + 4 * n), m = c.timeStart + 4 * (n - 1);
    const label = n ? `${12 + Math.floor(m / 60)}:${String(m % 60).padStart(2, '0')}` : '2026';
    out.push(`<path d="M${tx} ${c.bottom}v5" stroke="#fff"/><text x="${tx}" y="${c.bottom + 22}">27 Mar ${label}</text>`);
  }
  const [hx, hy] = c.head;
  out.push(`<use href="#panel" x="${hx}" y="${hy}" width="30" height="22"/><use href="#trade" x="${hx + 42}" y="${hy}" width="30" height="22"/>`);
  out.push(`<text x="${hx + 81}" y="${hy + 17}">XAUUSD, M1:  Gold vs US Dollar / Spot</text>`);
  const [name, nx, ex] = c.expert;
  out.push(`<text x="${nx}" y="${hy + 17}">${name}</text><use href="#hat" x="${c.right - 36}" y="${hy}" width="30" height="22"/><text class="expiry" x="${ex}" y="${hy + 31}">無期限</text>`);
  document.getElementById(c.id).innerHTML = `<g transform="translate(${c.ox} ${c.oy})">${out.join('')}</g>`;
}
charts.forEach(drawChart);

// Columns: type, volume, price, stop loss, take profit, close time, close price, commission, [swap,] profit, comment.
const front = [
  'buy|0.1|4430.24|4321.01|4431.36|13:0...|4427.09|-0.60|-31.50|[RESET]C_MAD(202502-...',
  'sell|0.2|4428.16|4535.19|4426.36|13:0...|4432.66|-1.20|-90.00|C_MAD(202502-2.0-20)',
  'buy|0.4|4432.59|4323.22|4433.69|13:0...|4429.26|-2.40|-133.20|C_MAD(202502-4.0-40)',
  'sell|0.8|4429.17|4538.63|4428.15|13:0...|4429.98|-4.80|-64.80|C_MAD(202502-8.0-80)',
  'buy|0.8|4429.97|4321.82|4431.06|13:0...|4427.08|-4.80|-231.20|C_MA(202502-8.0-80)',
  'sell|0.1|4427.72|4536.29|4426.26|13:0...|4431.10|-0.60|-33.80|[RESET]C_MA(202502-1....',
  'buy|0.2|4431.09|4322.81|4432.17|13:1...|4426.57|-1.20|-90.40|C_MAD(202502-2.0-20)',
  'sell|0.4|4426.12|4535.19|4425.47|13:1...|4429.19|-2.40|-122.80|C_MAD(202502-4.0-40)',
  'buy|0.8|4429.07|4321.59|4430.14|13:1...|4428.58|-4.80|-39.20|C_MAD(202502-8.0-80)',
  'sell|0.8|4428.53|4535.83|*4427.41|13:1...|4427.26|-4.80|101.60|C_MA(202502-8.0-80)'
];
const back = [
  'sell|0.1|4430.23|4434.46||12...|4428.36|-0.60||18.70|Rvs37932231',
  'sell|0.1|4428.19|4432.47||13...|4428.16|-0.60||0.30|Rvs37932231',
  'buy|0.2|4428.59|4424.29||13...|4432.51|-1.20||78.40|Rvs37932951',
  'sell|0.4|4432.18|4436.55||13...|4429.33|-2.40||114.00|Rvs37933305',
  'buy|0.8|4429.18|4424.80||13...|4429.65|-4.80||37.60|Rvs37933488',
  'sell|0.8|4429.65|4433.98||13...|4427.71|-4.80||155.20|Rvs37933514',
  'buy|0.1|4427.70|4423.31||13...|4430.94|-0.60||32.40|Rvs37933670',
  'sell|0.2|4430.93|4435.26||13...|4426.40|-1.20||90.60|Rvs37933898',
  'buy|0.4|4426.32|4421.95||13...|4428.92|-2.40||104.00|Rvs37934533',
  'sell|0.8|4428.94|4433.25||13...|4428.73|-4.80||16.80|Rvs37934717',
  'buy|0.8|4428.78|4424.43||13...|4426.98|-4.80||-144.00|Rvs37934732'
];

function fillTable(id, rows, opened) {
  const body = rows.map(row => {
    const f = row.split('|');
    const kind = f[0];
    const cells = f.map((v, n) => {
      let cls = '';
      if (v[0] === '*') { cls = 'hit'; v = v.slice(1); }
      if (n === 5) v = '2026.03.27 ' + v;
      if (n > 6 && n < f.length - 1 && v) cls = v[0] === '-' ? 'neg' : 'pos';
      return `<td class="${cls}">${v}</td>`;
    }).join('');
    return `<tr><td class="first"><svg class="i-${kind}"><use href="#deal"/></svg>${opened}</td><td>xauusd</td><td>3793...</td>${cells}</tr>`;
  }).join('');
  document.querySelector(`#${id} tbody`).innerHTML = body;
}
fillTable('history-front', front, '2026.03.2...');
fillTable('history-back', back, '2026.03....');
```
